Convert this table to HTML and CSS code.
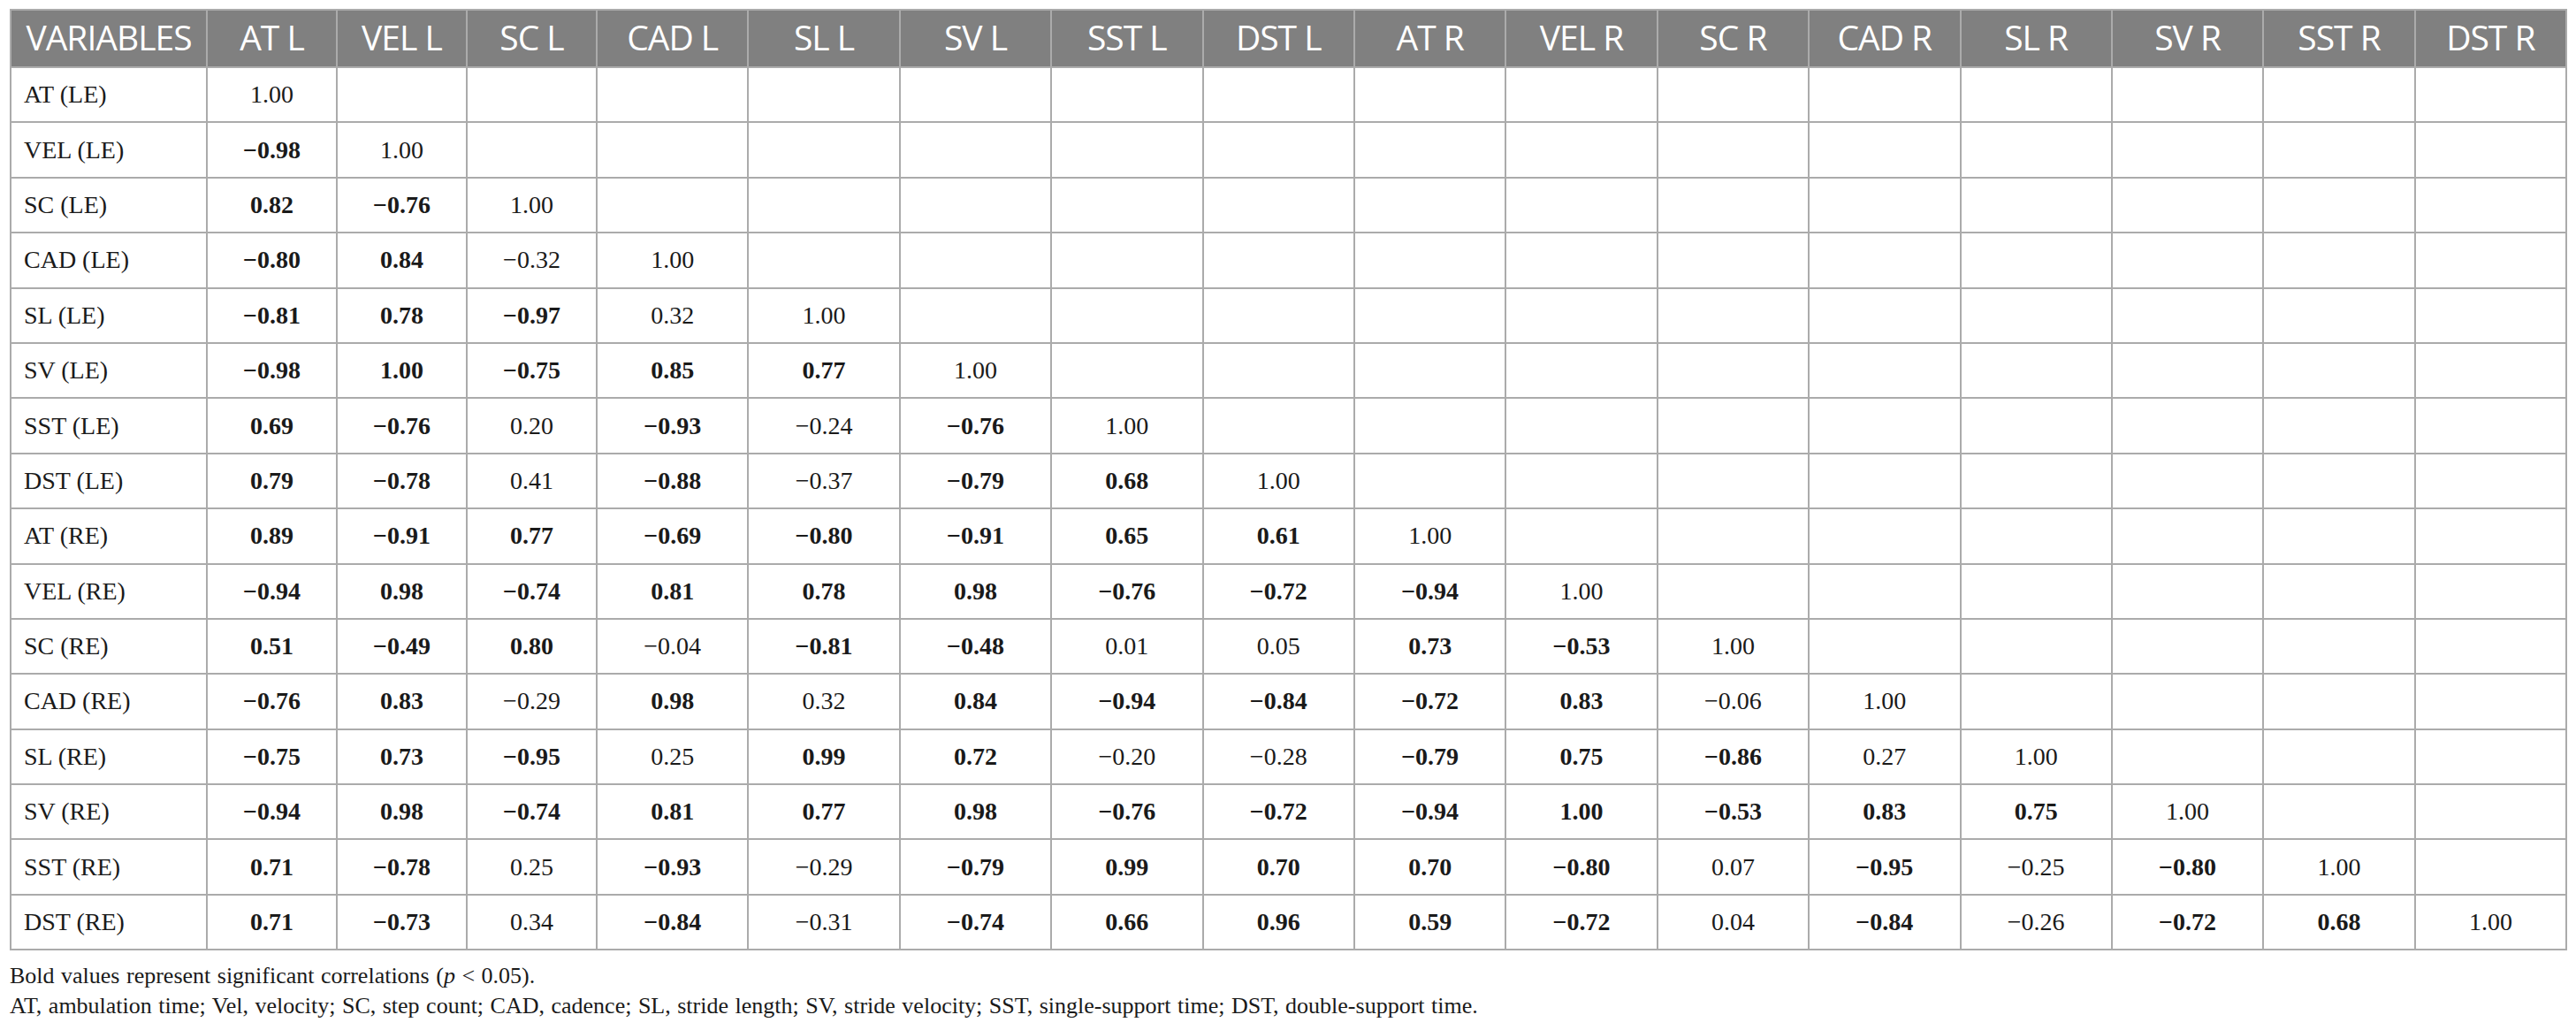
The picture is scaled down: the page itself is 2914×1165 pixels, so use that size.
FILE: index.html
```html
<!DOCTYPE html>
<html>
<head>
  <title>Correlations</title>
  <link rel="stylesheet" href="styles.css">
</head>
<body>
  <table class="corr">
    <colgroup>
      <col class="c-var">
      <col class="c-narrow"><col class="c-narrow"><col class="c-narrow">
      <col class="c-wide"><col class="c-wide"><col class="c-wide"><col class="c-wide"><col class="c-wide">
      <col class="c-wide"><col class="c-wide"><col class="c-wide"><col class="c-wide"><col class="c-wide">
      <col class="c-wide"><col class="c-wide"><col class="c-wide">
    </colgroup>
    <thead>
      <tr>
        <th>VARIABLES</th><th>AT L</th><th>VEL L</th><th>SC L</th><th>CAD L</th><th>SL L</th><th>SV L</th><th>SST L</th><th>DST L</th>
        <th>AT R</th><th>VEL R</th><th>SC R</th><th>CAD R</th><th>SL R</th><th>SV R</th><th>SST R</th><th>DST R</th>
      </tr>
    </thead>
    <tbody>
      <tr><td>AT (LE)</td><td>1.00</td><td></td><td></td><td></td><td></td><td></td><td></td><td></td><td></td><td></td><td></td><td></td><td></td><td></td><td></td><td></td></tr>
      <tr><td>VEL (LE)</td><td><b>−0.98</b></td><td>1.00</td><td></td><td></td><td></td><td></td><td></td><td></td><td></td><td></td><td></td><td></td><td></td><td></td><td></td><td></td></tr>
      <tr><td>SC (LE)</td><td><b>0.82</b></td><td><b>−0.76</b></td><td>1.00</td><td></td><td></td><td></td><td></td><td></td><td></td><td></td><td></td><td></td><td></td><td></td><td></td><td></td></tr>
      <tr><td>CAD (LE)</td><td><b>−0.80</b></td><td><b>0.84</b></td><td>−0.32</td><td>1.00</td><td></td><td></td><td></td><td></td><td></td><td></td><td></td><td></td><td></td><td></td><td></td><td></td></tr>
      <tr><td>SL (LE)</td><td><b>−0.81</b></td><td><b>0.78</b></td><td><b>−0.97</b></td><td>0.32</td><td>1.00</td><td></td><td></td><td></td><td></td><td></td><td></td><td></td><td></td><td></td><td></td><td></td></tr>
      <tr><td>SV (LE)</td><td><b>−0.98</b></td><td><b>1.00</b></td><td><b>−0.75</b></td><td><b>0.85</b></td><td><b>0.77</b></td><td>1.00</td><td></td><td></td><td></td><td></td><td></td><td></td><td></td><td></td><td></td><td></td></tr>
      <tr><td>SST (LE)</td><td><b>0.69</b></td><td><b>−0.76</b></td><td>0.20</td><td><b>−0.93</b></td><td>−0.24</td><td><b>−0.76</b></td><td>1.00</td><td></td><td></td><td></td><td></td><td></td><td></td><td></td><td></td><td></td></tr>
      <tr><td>DST (LE)</td><td><b>0.79</b></td><td><b>−0.78</b></td><td>0.41</td><td><b>−0.88</b></td><td>−0.37</td><td><b>−0.79</b></td><td><b>0.68</b></td><td>1.00</td><td></td><td></td><td></td><td></td><td></td><td></td><td></td><td></td></tr>
      <tr><td>AT (RE)</td><td><b>0.89</b></td><td><b>−0.91</b></td><td><b>0.77</b></td><td><b>−0.69</b></td><td><b>−0.80</b></td><td><b>−0.91</b></td><td><b>0.65</b></td><td><b>0.61</b></td><td>1.00</td><td></td><td></td><td></td><td></td><td></td><td></td><td></td></tr>
      <tr><td>VEL (RE)</td><td><b>−0.94</b></td><td><b>0.98</b></td><td><b>−0.74</b></td><td><b>0.81</b></td><td><b>0.78</b></td><td><b>0.98</b></td><td><b>−0.76</b></td><td><b>−0.72</b></td><td><b>−0.94</b></td><td>1.00</td><td></td><td></td><td></td><td></td><td></td><td></td></tr>
      <tr><td>SC (RE)</td><td><b>0.51</b></td><td><b>−0.49</b></td><td><b>0.80</b></td><td>−0.04</td><td><b>−0.81</b></td><td><b>−0.48</b></td><td>0.01</td><td>0.05</td><td><b>0.73</b></td><td><b>−0.53</b></td><td>1.00</td><td></td><td></td><td></td><td></td><td></td></tr>
      <tr><td>CAD (RE)</td><td><b>−0.76</b></td><td><b>0.83</b></td><td>−0.29</td><td><b>0.98</b></td><td>0.32</td><td><b>0.84</b></td><td><b>−0.94</b></td><td><b>−0.84</b></td><td><b>−0.72</b></td><td><b>0.83</b></td><td>−0.06</td><td>1.00</td><td></td><td></td><td></td><td></td></tr>
      <tr><td>SL (RE)</td><td><b>−0.75</b></td><td><b>0.73</b></td><td><b>−0.95</b></td><td>0.25</td><td><b>0.99</b></td><td><b>0.72</b></td><td>−0.20</td><td>−0.28</td><td><b>−0.79</b></td><td><b>0.75</b></td><td><b>−0.86</b></td><td>0.27</td><td>1.00</td><td></td><td></td><td></td></tr>
      <tr><td>SV (RE)</td><td><b>−0.94</b></td><td><b>0.98</b></td><td><b>−0.74</b></td><td><b>0.81</b></td><td><b>0.77</b></td><td><b>0.98</b></td><td><b>−0.76</b></td><td><b>−0.72</b></td><td><b>−0.94</b></td><td><b>1.00</b></td><td><b>−0.53</b></td><td><b>0.83</b></td><td><b>0.75</b></td><td>1.00</td><td></td><td></td></tr>
      <tr><td>SST (RE)</td><td><b>0.71</b></td><td><b>−0.78</b></td><td>0.25</td><td><b>−0.93</b></td><td>−0.29</td><td><b>−0.79</b></td><td><b>0.99</b></td><td><b>0.70</b></td><td><b>0.70</b></td><td><b>−0.80</b></td><td>0.07</td><td><b>−0.95</b></td><td>−0.25</td><td><b>−0.80</b></td><td>1.00</td><td></td></tr>
      <tr><td>DST (RE)</td><td><b>0.71</b></td><td><b>−0.73</b></td><td>0.34</td><td><b>−0.84</b></td><td>−0.31</td><td><b>−0.74</b></td><td><b>0.66</b></td><td><b>0.96</b></td><td><b>0.59</b></td><td><b>−0.72</b></td><td>0.04</td><td><b>−0.84</b></td><td>−0.26</td><td><b>−0.72</b></td><td><b>0.68</b></td><td>1.00</td></tr>
    </tbody>
  </table>
  <div class="notes">
    <p>Bold values represent significant correlations (<i>p</i> &lt; 0.05).</p>
    <p>AT, ambulation time; Vel, velocity; SC, step count; CAD, cadence; SL, stride length; SV, stride velocity; SST, single-support time; DST, double-support time.</p>
  </div>
</body>
</html>
```

FILE: styles.css
```css
body {
  margin: 0;
  padding: 10px 11px;
  background-color: #fff;
  color: #1a1a1a;
  font-family: "Liberation Serif", "Times New Roman", serif;
}

.corr {
  border-collapse: collapse;
  table-layout: fixed;
  width: 2891px;
}

.c-var {
  width: 222px;
}

.c-narrow {
  width: 147px;
}

.c-wide {
  width: 171.4px;
}

.corr th {
  height: 59px;
  padding: 0 0 4px;
  background-color: #808080;
  color: #fff;
  font-family: "Open Sans", "Liberation Sans", sans-serif;
  font-weight: 400;
  font-size: 39px;
  letter-spacing: -1px;
  text-align: center;
  border: 2px solid #ababab;
}

.corr td {
  height: 60.4px;
  padding: 0;
  font-size: 28px;
  text-align: center;
  border: 2px solid #ababab;
}

.corr td:first-child {
  text-align: left;
  padding-left: 14px;
}

.notes {
  margin-top: 12px;
  font-size: 26px;
  line-height: 34px;
  word-spacing: 1px;
}

.notes p {
  margin: 0;
}
```
